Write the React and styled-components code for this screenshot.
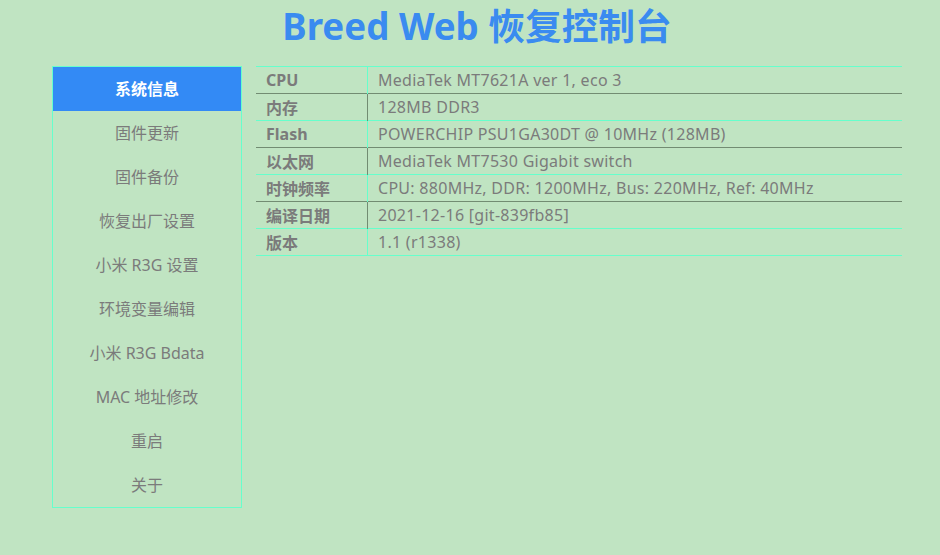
import React, { useState } from "react";
import styled, { createGlobalStyle } from "styled-components";

const GlobalStyle = createGlobalStyle`
  html, body {
    margin: 0;
    padding: 0;
    background: #c0e4c2;
  }
  body {
    font-family: "Noto Sans", "Noto Sans CJK SC", sans-serif;
    color: #7b7b7b;
  }
`;

const Page = styled.div`
  width: 850px;
  margin-left: 52px;
  height: 555px;
`;

const Title = styled.h1`
  margin: 0;
  padding-top: 1px;
  height: 53px;
  text-align: center;
  font-size: 36.7px;
  line-height: 50px;
  font-weight: bold;
  color: #3a8bf0;
  font-family: "Noto Sans", "Noto Sans CJK SC", sans-serif;
`;

const Main = styled.div`
  display: flex;
  align-items: flex-start;
  gap: 14px;
  margin-top: 12px;
`;

const Menu = styled.ul`
  list-style: none;
  margin: 0;
  padding: 0;
  width: 188px;
  border: 1px solid #66ffcc;
  flex-shrink: 0;
`;

const MenuItem = styled.li`
  height: 44px;
  line-height: 44px;
  text-align: center;
  font-size: 16px;
  cursor: pointer;
  background: ${(p) => (p.$active ? "#338af5" : "transparent")};
  color: ${(p) => (p.$active ? "#ffffff" : "#7b7b7b")};
  font-weight: ${(p) => (p.$active ? "bold" : "normal")};
`;

const InfoTable = styled.table`
  flex: 1;
  border-collapse: collapse;
  font-size: 16px;
`;

const Row = styled.tr`
  border-top: 1px solid ${(p) => (p.$odd ? "#728c72" : "#66ffcc")};
  &:last-child {
    border-bottom: 1px solid #66ffcc;
  }
`;

const Key = styled.td`
  width: 101px;
  height: 26px;
  padding: 0 0 0 10px;
  font-weight: bold;
  border-right: 1px solid ${(p) => (p.$odd ? "#728c72" : "#66ffcc")};
`;

const Value = styled.td`
  padding: 0 0 0 10px;
  height: 26px;
  letter-spacing: 0.28px;
`;

const menuItems = [
  "系统信息",
  "固件更新",
  "固件备份",
  "恢复出厂设置",
  "小米 R3G 设置",
  "环境变量编辑",
  "小米 R3G Bdata",
  "MAC 地址修改",
  "重启",
  "关于",
];

const info = [
  ["CPU", "MediaTek MT7621A ver 1, eco 3"],
  ["内存", "128MB DDR3"],
  ["Flash", "POWERCHIP PSU1GA30DT @ 10MHz (128MB)"],
  ["以太网", "MediaTek MT7530 Gigabit switch"],
  ["时钟频率", "CPU: 880MHz, DDR: 1200MHz, Bus: 220MHz, Ref: 40MHz"],
  ["编译日期", "2021-12-16 [git-839fb85]"],
  ["版本", "1.1 (r1338)"],
];

export default function App() {
  const [active, setActive] = useState(0);

  return (
    <>
      <GlobalStyle />
      <Page>
        <Title>Breed Web 恢复控制台</Title>
        <Main>
          <Menu>
            {menuItems.map((item, i) => (
              <MenuItem key={item} $active={i === active} onClick={() => setActive(i)}>
                {item}
              </MenuItem>
            ))}
          </Menu>
          <InfoTable>
            <tbody>
              {info.map(([k, v], i) => (
                <Row key={k} $odd={i % 2 === 1}>
                  <Key $odd={i % 2 === 1}>{k}</Key>
                  <Value>{v}</Value>
                </Row>
              ))}
            </tbody>
          </InfoTable>
        </Main>
      </Page>
    </>
  );
}
